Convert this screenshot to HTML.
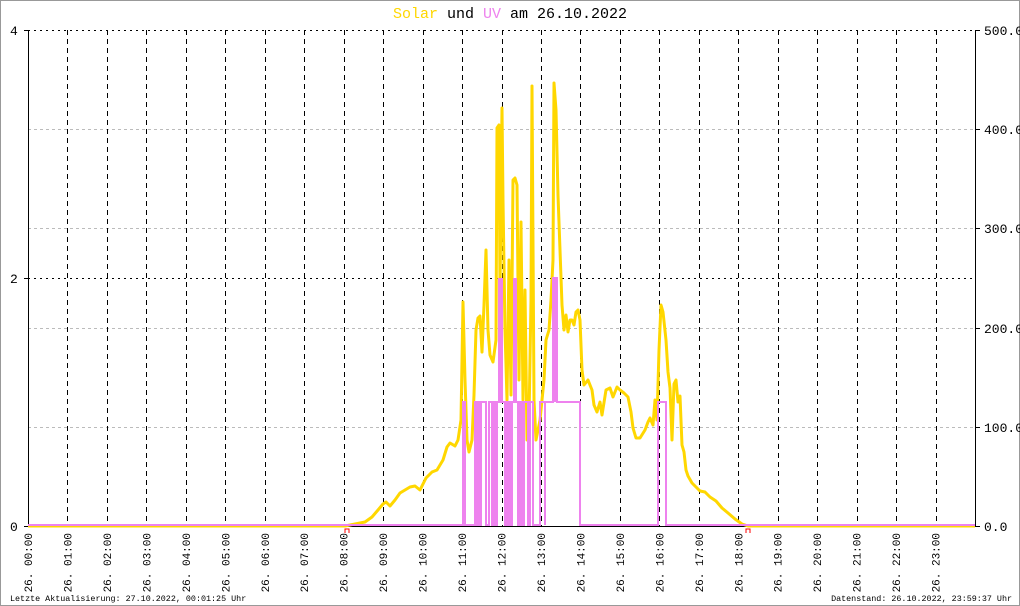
<!DOCTYPE html>
<html><head><meta charset="utf-8"><style>
html,body{margin:0;padding:0;background:#fff}
svg{display:block}
text{font-family:"Liberation Mono","DejaVu Sans Mono",monospace}
</style></head><body>
<svg width="1020" height="606" viewBox="0 0 1020 606" xmlns="http://www.w3.org/2000/svg">
<rect x="0.5" y="0.5" width="1019" height="605" fill="#fff" stroke="#999"/>
<text x="510" y="18" font-size="15" text-anchor="middle"><tspan fill="#FFD700">Solar</tspan> und <tspan fill="#EE82EE">UV</tspan> am 26.10.2022</text>
<g stroke="#bbb" stroke-dasharray="3,3" stroke-width="1">
<line x1="28" y1="129.5" x2="975" y2="129.5"/><line x1="28" y1="228.5" x2="975" y2="228.5"/>
<line x1="28" y1="328.5" x2="975" y2="328.5"/><line x1="28" y1="427.5" x2="975" y2="427.5"/>
</g>
<g stroke="#000" stroke-dasharray="2,4" stroke-width="1">
<line x1="28" y1="30.5" x2="975" y2="30.5"/><line x1="28" y1="278.5" x2="975" y2="278.5"/>
</g>
<g id="vl" stroke="#000" stroke-dasharray="5,4" stroke-width="1"></g>
<line x1="28.5" y1="30" x2="28.5" y2="526" stroke="#000"/>
<line x1="975.5" y1="30" x2="975.5" y2="526" stroke="#000"/>
<line x1="24" y1="30.5" x2="28" y2="30.5" stroke="#000"/>
<line x1="24" y1="278.5" x2="28" y2="278.5" stroke="#000"/>
<line x1="24" y1="526.5" x2="28" y2="526.5" stroke="#000"/>
<g stroke="#000"><line x1="975" y1="30.5" x2="980" y2="30.5"/><line x1="975" y1="129.5" x2="980" y2="129.5"/><line x1="975" y1="228.5" x2="980" y2="228.5"/><line x1="975" y1="328.5" x2="980" y2="328.5"/><line x1="975" y1="427.5" x2="980" y2="427.5"/><line x1="975" y1="526.5" x2="980" y2="526.5"/></g>
<g font-size="13" fill="#000">
<text x="10" y="35">4</text><text x="10" y="283">2</text><text x="10" y="531">0</text>
<text x="984" y="35">500.0</text><text x="984" y="134">400.0</text><text x="984" y="233">300.0</text><text x="984" y="333">200.0</text><text x="984" y="432">100.0</text><text x="984" y="531">0.0</text>
</g>
<line x1="28" y1="526.5" x2="975" y2="526.5" stroke="#000"/>
<polyline fill="none" stroke="#FFD700" stroke-width="3" stroke-linejoin="round" points="28,526 345,526 355,524 365,522 372,517 378,510 383,504 386,502 390,506 395,500 400,493 405,490 410,487 415,486 420,490 426,478 432,472 437,470 443,460 447,447 450,443 455,446 458,440 461,420 463,302 465,380 467,440 469,452 472,440 474,395 476,330 478,318 480,316 482,352 484,305 486,250 488,330 490,355 493,362 496,340 497,128 499,125 500,290 502,108 503,200 505,330 507,400 509,260 511,395 513,180 515,178 517,185 519,380 521,222 523,400 525,290 527,440 529,420 531,300 532,86 534,400 536,440 538,430 540,420 542,400 544,380 546,340 549,330 551,300 553,260 554,83 556,110 558,195 560,250 562,305 564,330 566,315 568,332 570,320 572,320 574,325 576,312 578,310 580,320 582,370 584,385 588,380 592,390 594,405 597,412 600,402 602,415 606,390 610,388 613,397 617,387 620,390 624,393 628,397 631,412 633,428 636,438 640,438 645,430 648,422 650,418 653,425 655,400 657,420 659,350 661,305 663,312 666,340 668,372 670,388 672,440 674,384 676,380 678,402 680,396 682,445 684,452 686,470 688,476 692,483 697,488 700,491 705,492 710,497 716,501 722,508 728,513 735,519 742,524 748,526 975,526"/>
<g fill="#EE82EE">
<rect x="475" y="402" width="7" height="124"/>
<rect x="491" y="402" width="7" height="124"/>
<rect x="507" y="402" width="6" height="124"/>
<rect x="517" y="402" width="8" height="124"/>
<rect x="527" y="402" width="4" height="124"/>
<rect x="498" y="278" width="5" height="124"/>
<rect x="513" y="278" width="4" height="124"/>
<rect x="553" y="278" width="4" height="124"/>
</g>
<polyline fill="none" stroke="#EE82EE" stroke-width="2" points="28,525 463,525 463,402 465,402 465,525 475,525 475,402 486,402 486,525 489,525 489,402 505,402 505,525 507,525 507,402 533,402 533,525 540,525 540,402 545,402 545,525 545,402 553,402 553,278 557,278 557,402 580,402 580,525 658,525 658,402 666,402 666,525 975,525"/>
<g fill="none" stroke="#f00" stroke-width="1"><path d="M345,533V529H349V533"/><path d="M746,533V529H750V533"/></g>
<g id="xl" font-size="11" fill="#000"></g>
<text x="10" y="601" font-size="8.4">Letzte Aktualisierung: 27.10.2022, 00:01:25 Uhr</text>
<text x="1012" y="601" font-size="8.4" text-anchor="end">Datenstand: 26.10.2022, 23:59:37 Uhr</text>
<script>
var vl=document.getElementById('vl'),xl=document.getElementById('xl'),ns='http://www.w3.org/2000/svg';
for(var h=0;h<24;h++){var x=28+h*39.46;
if(h>0){var l=document.createElementNS(ns,'line');l.setAttribute('x1',Math.round(x)+.5);l.setAttribute('x2',Math.round(x)+.5);l.setAttribute('y1',30);l.setAttribute('y2',526);vl.appendChild(l);}
var t=document.createElementNS(ns,'text');t.setAttribute('transform','translate('+(x+4)+',533) rotate(-90)');t.setAttribute('text-anchor','end');t.textContent='26. '+(h<10?'0':'')+h+':00';xl.appendChild(t);}
</script>
</svg>
</body></html>
